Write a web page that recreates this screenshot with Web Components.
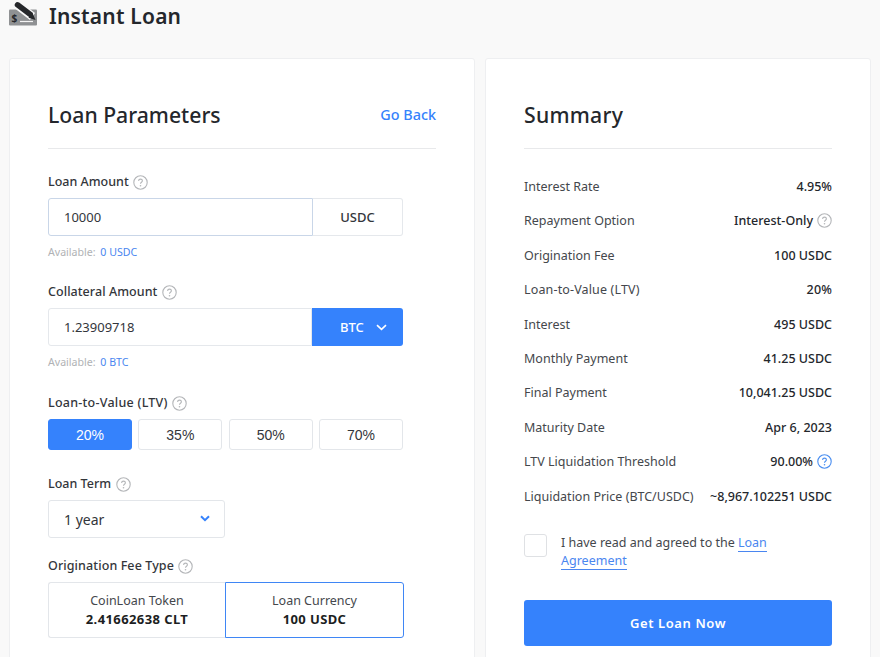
<!DOCTYPE html>
<html>
<head>
<meta charset="utf-8">
<title>Instant Loan</title>
<style>
  html, body { margin: 0; height: 657px; overflow: hidden; background: #f9f9f9; }
  body { font-family: "Noto Sans", "Open Sans", sans-serif; color: #24272c; }
</style>
</head>
<body>
<loan-page></loan-page>

<script>
const helpIcon = (color = "#b4b6b9") => `
  <svg class="help" width="15" height="15" viewBox="0 0 15 15" fill="none">
    <circle cx="7.5" cy="7.5" r="6.7" stroke="${color}" stroke-width="1.1"/>
    <path d="M5.6 6c0-1.2.9-1.9 1.9-1.9s1.9.7 1.9 1.7c0 1.4-1.9 1.5-1.9 3" stroke="${color}" stroke-width="1.1"/>
    <circle cx="7.5" cy="10.8" r=".8" fill="${color}"/>
  </svg>`;

class FieldLabel extends HTMLElement {
  constructor() {
    super();
    this.attachShadow({ mode: "open" }).innerHTML = `
      <style>
        :host { display: flex; align-items: center; gap: 4.5px; font-size: 12.5px; font-weight: 500; line-height: 18px; color: #33363b; }
        svg { display: block; }
      </style>
      <slot></slot>${helpIcon()}`;
  }
}

class AmountField extends HTMLElement {
  constructor() {
    super();
    const active = this.hasAttribute("active");
    this.attachShadow({ mode: "open" }).innerHTML = `
      <style>
        :host { display: block; width: 355px; }
        .row { display: flex; height: 38px; box-sizing: border-box; font-size: 13px; }
        .value { flex: 1; display: flex; align-items: center; padding-left: 15px; background: #fff;
          border: 1px solid ${active ? "#e5e8ec" : "#c9d6e8"}; border-radius: 3px 0 0 3px; color: #33363b; }
        .unit { width: ${active ? 91 : 90}px; box-sizing: border-box; display: flex; align-items: center; gap: 12px;
          font-weight: 500; border-radius: 0 3px 3px 0;
          ${active ? "padding-left: 28px; background: #3582fc; color: #fff;" : "justify-content: center; border: 1px solid #e5e8ec; border-left: 0; color: #33363b;"} }
        .avail { margin-top: 9px; font-size: 10.6px; line-height: 15px; color: #b0b2b5; }
        .avail span { color: #4a86f0; margin-left: 2px; }
        svg { display: block; }
      </style>
      <div class="row">
        <div class="value">${this.getAttribute("value")}</div>
        <div class="unit">${this.getAttribute("unit")}${active ? `<svg width="11" height="7" viewBox="0 0 11 7" fill="none"><path d="M1 1.2 5.5 5.4 10 1.2" stroke="#fff" stroke-width="1.6"/></svg>` : ""}</div>
      </div>
      <div class="avail">Available: <span>0 ${this.getAttribute("unit")}</span></div>`;
  }
}

class LtvPicker extends HTMLElement {
  constructor() {
    super();
    const items = ["20%", "35%", "50%", "70%"];
    this.attachShadow({ mode: "open" }).innerHTML = `
      <style>
        :host { display: grid; grid-template-columns: repeat(4, 84px); column-gap: 6.33px; width: 355px; font-family: "Liberation Sans", sans-serif; font-size: 14px; }
        div { height: 31px; box-sizing: border-box; display: flex; align-items: center; justify-content: center;
          border: 1px solid #e3e6ea; border-radius: 3px; background: #fff; color: #33363b; }
        div.on { background: #3582fc; border-color: #3582fc; color: #fff; }
      </style>
      ${items.map((t, i) => `<div class="${i ? "" : "on"}">${t}</div>`).join("")}`;
  }
}

class TermSelect extends HTMLElement {
  constructor() {
    super();
    this.attachShadow({ mode: "open" }).innerHTML = `
      <style>
        :host { display: flex; align-items: center; justify-content: space-between; box-sizing: border-box; width: 177px; height: 38px;
          padding: 0 14px 0 15px; background: #fff; border: 1px solid #e3e6ea; border-radius: 3px; font-size: 14px; color: #33363b; }
        svg { display: block; margin-top: -2px; }
      </style>
      <slot></slot>
      <svg width="10" height="7" viewBox="0 0 10 7" fill="none"><path d="M1 1.2 5 5.2 9 1.2" stroke="#3582fc" stroke-width="2"/></svg>`;
  }
}

class FeeOption extends HTMLElement {
  constructor() {
    super();
    this.attachShadow({ mode: "open" }).innerHTML = `
      <style>
        :host { display: flex; flex-direction: column; align-items: center; justify-content: center; box-sizing: border-box; height: 56px;
          border: 1px solid #e3e6ea; background: #fff; font-size: 12.5px; line-height: 18px; color: #44474c; }
        :host([selected]) { border-color: #3f86f5; border-radius: 0 3px 3px 0; }
        :host(:not([selected])) { border-right: 0; border-radius: 3px 0 0 3px; }
        b { font-size: 13px; letter-spacing: .4px; color: #1c1e22; }
      </style>
      <span>${this.getAttribute("name")}</span><b>${this.getAttribute("amount")}</b>`;
  }
}

class SummaryRow extends HTMLElement {
  constructor() {
    super();
    const help = this.getAttribute("help");
    this.attachShadow({ mode: "open" }).innerHTML = `
      <style>
        :host { display: flex; align-items: center; justify-content: space-between; height: 34.4px; font-size: 12.5px; color: #44474c; }
        .v { display: flex; align-items: center; gap: 4px; font-weight: 500; color: #24272c; white-space: nowrap; }
        svg { display: block; }
      </style>
      <span>${this.getAttribute("label")}</span>
      <span class="v">${this.getAttribute("value")}${help ? helpIcon(help) : ""}</span>`;
  }
}

class CardTitle extends HTMLElement {
  constructor() {
    super();
    this.attachShadow({ mode: "open" }).innerHTML = `
      <style>
        :host { display: flex; align-items: center; justify-content: space-between; height: 36px; padding-bottom: 16px; border-bottom: 1px solid #e8e9eb; }
        h2 { margin: 0; font-size: 21.2px; font-weight: 500; color: #24272c; }
        ::slotted(a) { font-size: 14.4px; font-weight: 500; color: #3582fc; }
      </style>
      <h2>${this.getAttribute("text")}</h2><slot></slot>`;
  }
}

class LoanPage extends HTMLElement {
  constructor() {
    super();
    this.attachShadow({ mode: "open" }).innerHTML = `
      <style>
        :host { display: block; padding: 0 9px; }
        header { display: flex; align-items: center; gap: 11px; height: 32px; margin-bottom: 26px; }
        h1 { margin: 0; font-size: 21px; font-weight: 600; color: #24272c; letter-spacing: .2px; }
        header svg { display: block; margin-top: -6px; overflow: visible; }
        .cols { display: flex; gap: 10px; align-items: flex-start; }
        .card { box-sizing: border-box; background: #fff; border: 1px solid #eeeff1; border-radius: 3px; height: 640px; }
        .left { width: 466px; padding: 37px 38px 0; }
        .right { width: 386px; padding: 37px 38px 0; }
        field-label { margin-bottom: 7px; }
        .first { margin-top: 24px; }
        .collateral { margin-top: 23px; }
        .ltv { margin-top: 24px; }
        .term { margin-top: 25px; }
        .fee { margin-top: 19px; }
        .fees { display: grid; grid-template-columns: 177px 179px; width: 356px; }
        .rows { margin-top: 20.4px; }
        .agree { display: flex; gap: 14px; margin-top: 20.6px; font-size: 12.5px; line-height: 18px; color: #44474c; }
        .box { flex: none; width: 23px; height: 23px; box-sizing: border-box; border: 1px solid #dfe1e4; border-radius: 3px; }
        .agree a { color: #4a86f0; border-bottom: 1px solid #4a86f0; }
        .cta { height: 46px; margin-top: 30px; display: flex; align-items: center; justify-content: center; background: #3582fc; color: #fff;
          border-radius: 3px; font-size: 13px; font-weight: 600; letter-spacing: .6px; }
      </style>
      <header>
        <svg width="29" height="26" viewBox="0 0 29 26" fill="none">
          <rect x="0" y="9.5" width="28" height="16" rx="1" fill="#8f9193"/>
          <path d="M6.5 3.5 23.5 16.5" stroke="#f9f9f9" stroke-width="8.5"/>
          <path d="M8.5 4.800 21 14.200" stroke="#26282b" stroke-width="5.500" stroke-linecap="round"/>
          <path d="M19.500 17.800 23.300 12.600 26.500 20z" fill="#26282b"/>
          <path d="M11 21.500H24" stroke="#f4f4f4" stroke-width="1.200"/>
          <text x="2.500" y="22" font-size="10" font-weight="700" fill="#26282b" font-family="Noto Sans">$</text>
        </svg>
        <h1>Instant Loan</h1>
      </header>
      <div class="cols">
        <section class="card left">
          <card-title text="Loan Parameters"><a>Go Back</a></card-title>
          <div class="first">
            <field-label>Loan Amount</field-label>
            <amount-field value="10000" unit="USDC"></amount-field>
          </div>
          <div class="collateral">
            <field-label style="letter-spacing:.06px">Collateral Amount</field-label>
            <amount-field value="1.23909718" unit="BTC" active></amount-field>
          </div>
          <div class="ltv">
            <field-label style="letter-spacing:.25px">Loan-to-Value (LTV)</field-label>
            <ltv-picker></ltv-picker>
          </div>
          <div class="term">
            <field-label>Loan Term</field-label>
            <term-select>1 year</term-select>
          </div>
          <div class="fee">
            <field-label style="letter-spacing:.1px">Origination Fee Type</field-label>
            <div class="fees">
              <fee-option name="CoinLoan Token" amount="2.41662638 CLT"></fee-option>
              <fee-option name="Loan Currency" amount="100 USDC" selected></fee-option>
            </div>
          </div>
        </section>
        <section class="card right">
          <card-title text="Summary" style="letter-spacing:.25px"></card-title>
          <div class="rows">
            <summary-row label="Interest Rate" value="4.95%"></summary-row>
            <summary-row label="Repayment Option" value="Interest-Only" help="#b4b6b9"></summary-row>
            <summary-row label="Origination Fee" value="100 USDC"></summary-row>
            <summary-row label="Loan-to-Value (LTV)" value="20%" style="letter-spacing:.15px"></summary-row>
            <summary-row label="Interest" value="495 USDC"></summary-row>
            <summary-row label="Monthly Payment" value="41.25 USDC"></summary-row>
            <summary-row label="Final Payment" value="10,041.25 USDC"></summary-row>
            <summary-row label="Maturity Date" value="Apr 6, 2023"></summary-row>
            <summary-row label="LTV Liquidation Threshold" value="90.00%" help="#4a8ef0"></summary-row>
            <summary-row label="Liquidation Price (BTC/USDC)" value="~8,967.102251 USDC"></summary-row>
          </div>
          <div class="agree">
            <div class="box"></div>
            <div>I have read and agreed to the <a>Loan</a><br><a>Agreement</a></div>
          </div>
          <div class="cta">Get Loan Now</div>
        </section>
      </div>`;
  }
}

customElements.define("field-label", FieldLabel);
customElements.define("amount-field", AmountField);
customElements.define("ltv-picker", LtvPicker);
customElements.define("term-select", TermSelect);
customElements.define("fee-option", FeeOption);
customElements.define("summary-row", SummaryRow);
customElements.define("card-title", CardTitle);
customElements.define("loan-page", LoanPage);
</script>
</body>
</html>
